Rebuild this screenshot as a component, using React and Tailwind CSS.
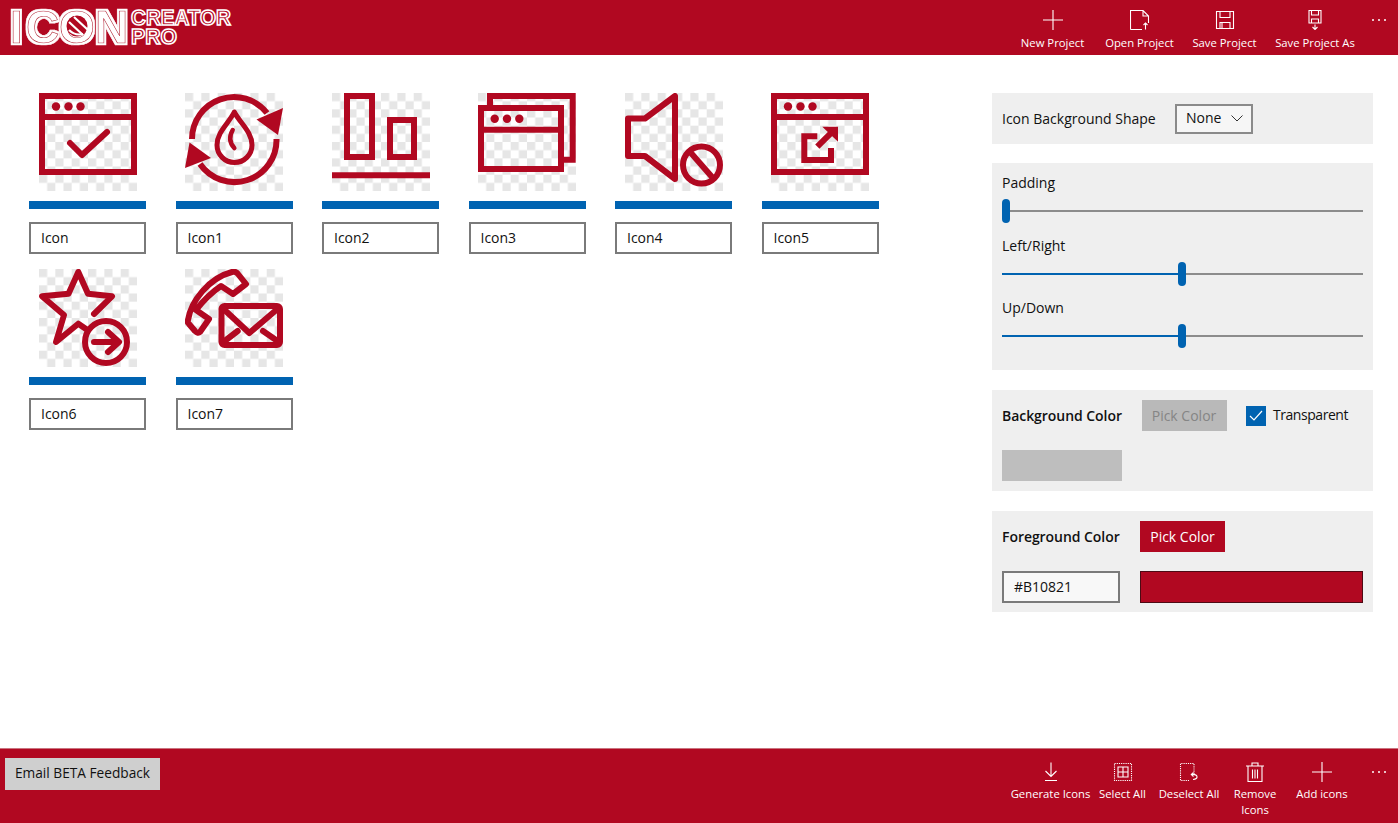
import React from 'react';

const RED = '#b10821';

const tiles = [
  { name: 'Icon', art: <WindowCheck /> },
  { name: 'Icon1', art: <DropCycle /> },
  { name: 'Icon2', art: <AlignBottom /> },
  { name: 'Icon3', art: <Windows /> },
  { name: 'Icon4', art: <SpeakerBlocked /> },
  { name: 'Icon5', art: <WindowExternal /> },
  { name: 'Icon6', art: <StarArrow /> },
  { name: 'Icon7', art: <PhoneMail /> },
];

function WindowFrame() {
  return (
    <>
      <rect x="3" y="3" width="92" height="76" />
      <path d="M3 24H95" />
      <g fill={RED} stroke="none">
        <circle cx="17" cy="13.5" r="4.2" />
        <circle cx="29.5" cy="13.5" r="4.2" />
        <circle cx="41.5" cy="13.5" r="4.2" />
      </g>
    </>
  );
}

function WindowCheck() {
  return (
    <>
      <WindowFrame />
      <path d="M31 50L43 62L68 39" strokeLinecap="round" strokeLinejoin="round" />
    </>
  );
}

function DropCycle() {
  return (
    <>
      <path d="M7 46A42 42 0 0 1 82 20" />
      <path d="M91.5 46A42 42 0 0 1 15 71" />
      <path d="M98 15L93 42L71.5 26.5Z" fill={RED} stroke="none" />
      <path d="M0 75L4.5 49.5L26 65Z" fill={RED} stroke="none" />
      <path d="M49.3 19C44 30 32 39 32 52A17.5 17.5 0 0 0 67 52C67 39 55 30 49.3 19Z" strokeWidth="5" strokeLinejoin="round" />
      <path d="M47.7 37Q42 47 49.3 55" strokeWidth="4.5" strokeLinecap="round" />
    </>
  );
}

function AlignBottom() {
  return (
    <>
      <rect x="15" y="3" width="25" height="61" />
      <rect x="58" y="27" width="24" height="37" />
      <path d="M0 82.3H98" />
    </>
  );
}

function Windows() {
  return (
    <>
      <path d="M12 12V3H94.7V66.7H86" />
      <rect x="3" y="15" width="80" height="61" />
      <path d="M3 36.7H83" />
      <g fill={RED} stroke="none">
        <circle cx="16.7" cy="25.7" r="4.2" />
        <circle cx="29" cy="25.7" r="4.2" />
        <circle cx="41.3" cy="25.7" r="4.2" />
      </g>
    </>
  );
}

function SpeakerBlocked() {
  return (
    <>
      <path d="M3 25.5H20L50 3V86L20 63H3Z" strokeLinejoin="round" />
      <circle cx="76.5" cy="72" r="18.5" />
      <path d="M66 60L87 84" />
    </>
  );
}

function WindowExternal() {
  return (
    <>
      <WindowFrame />
      <path d="M46.3 43.3H33.3V67H60V55" />
      <path d="M46.3 53.7L59.7 40.3" />
      <path d="M51.3 33.7H67V48.7Z" fill={RED} stroke="none" />
    </>
  );
}

function StarArrow() {
  return (
    <>
      <path d="M55 45L73 27.3L49 24.7L39.3 3L29.5 24.7L3 27.3L25 46L17 73L39.3 54.7L47 60" strokeLinejoin="round" strokeLinecap="round" />
      <circle cx="67" cy="73" r="21" />
      <path d="M55 73H79M69 63L80 73L69 83" strokeLinecap="round" strokeLinejoin="round" />
    </>
  );
}

function PhoneMail() {
  return (
    <>
      <path d="M3 51C6 32 24 9 47 3Q51 2 53 5L61 15L48 25L36 17C27 23 18 32 11 41L24 50L15 63Q13 65 10 62L4 55Q2 53 3 51Z" strokeLinejoin="round" />
      <rect x="36.5" y="37" width="58.5" height="39" rx="3" />
      <path d="M38.3 39.7L64.3 64L92.7 39.7M41 71L52.7 62M78 62L91 71" strokeLinecap="round" strokeLinejoin="round" />
    </>
  );
}

function IconArt({ name, children }) {
  const id = `checker-${name}`;
  return (
    <svg viewBox="0 0 98 98" className="w-[98px] h-[98px] block">
      <defs>
        <pattern id={id} width="16.34" height="16.34" patternUnits="userSpaceOnUse">
          <rect width="8.17" height="8.17" fill="#e6e6e6" />
          <rect x="8.17" y="8.17" width="8.17" height="8.17" fill="#e6e6e6" />
        </pattern>
      </defs>
      <rect width="98" height="98" fill={`url(#${id})`} />
      <g fill="none" stroke={RED} strokeWidth="6">{children}</g>
    </svg>
  );
}

function Tile({ name, art }) {
  return (
    <div className="flex flex-col items-center w-[117px]">
      <IconArt name={name}>{art}</IconArt>
      <div className="w-full h-2 bg-[#0063b1] mt-[10px]" />
      <div className="w-full h-8 mt-[13px] border-2 border-[#7a7a7a] pl-[10px] pb-[2px] flex items-center text-[14px] text-[#111]">{name}</div>
    </div>
  );
}

function Logo() {
  return (
    <svg viewBox="0 0 240 55" className="w-[240px] h-[55px] block">
      <defs>
        <filter id="halo" x="-10%" y="-10%" width="120%" height="120%">
          <feMorphology in="SourceAlpha" operator="dilate" radius="1.7" result="fat" />
          <feFlood floodColor="#ffffff" />
          <feComposite in2="fat" operator="in" result="edge" />
          <feMerge>
            <feMergeNode in="edge" />
            <feMergeNode in="SourceGraphic" />
          </feMerge>
        </filter>
      </defs>
      <text x="10 26 59 95" y="42.5" fontFamily="Liberation Sans" fontWeight="700" fontSize="46" fill="#fff" stroke={RED} strokeWidth="0.6" filter="url(#halo)">ICON</text>
      <circle cx="77" cy="26" r="10.5" fill={RED} />
      <g fill="none" stroke="#fff" strokeWidth="2.2">
        <path d="M69 22L83 35M74 17L88 30" />
        <path d="M69 30Q75 36 83 34" />
      </g>
      <text x="131" y="24.5" fontFamily="Liberation Sans" fontWeight="700" fontSize="22" textLength="100" lengthAdjust="spacingAndGlyphs" fill={RED} stroke="#fff" strokeWidth="1.6">CREATOR</text>
      <text x="131" y="44" fontFamily="Liberation Sans" fontWeight="700" fontSize="22" textLength="46" lengthAdjust="spacingAndGlyphs" fill={RED} stroke="#fff" strokeWidth="1.6">PRO</text>
    </svg>
  );
}

const glyphs = {
  plus: <path d="M10 0V20M0 10H20" />,
  open: <path d="M5 .5H13L18.5 6V13M13 .5V6H18.5M12 19.5H.5M.5 19.5V.5H5M15.5 19.5V13M13.5 15L15.5 13L17.5 15" />,
  save: <path d="M1.5 1.5H18.5V18.5H1.5ZM5 1.5V7.5H15V1.5M5 18.5V12.5H15V18.5M7 12.5V18.5" />,
  saveAs: <path d="M4 .5H16V13H4ZM6.5 .5V5H13.5V.5M6.5 13V9H13.5V13M10 14.5V19M7.5 17L10 19.5L12.5 17" />,
  download: <path d="M10 .5V14M4.5 9L10 14.5L15.5 9M4 18.5H16" />,
  select: (
    <>
      <path d="M1.5 1.5H18.5V18.5H1.5Z" strokeDasharray="1.2 1" />
      <path d="M5 5H15V15H5ZM10 5V15M5 10H15" />
    </>
  ),
  deselect: (
    <>
      <path d="M15 12V1.5H1.5V18.5H10" strokeDasharray="1.2 1" />
      <path d="M14 17.5Q18.5 17 18 14.5Q17.5 12 12.5 12.5M14.5 10.5L12.3 12.5L14.5 14.5" />
    </>
  ),
  trash: <path d="M3 4.5V19.5H17V4.5M1 4H19M7 4V1H13V4M7.5 7.5V16.5M10 7.5V16.5M12.5 7.5V16.5" />,
};

function ToolButton({ width, icon, label, gap = 'mt-[5px]' }) {
  return (
    <div className={`flex flex-col items-center text-white ${width}`}>
      <svg viewBox="0 0 20 20" className="w-5 h-5 block" fill="none" stroke="#fff" strokeWidth="1.1">{glyphs[icon]}</svg>
      <span className={`text-[11.3px] leading-4 text-center ${gap}`}>{label}</span>
    </div>
  );
}

function More() {
  return (
    <div className="w-[33px] h-5 pr-[6px] flex items-center justify-center gap-[4px]">
      <span className="w-[2px] h-[2px] rounded-full bg-white" />
      <span className="w-[2px] h-[2px] rounded-full bg-white" />
      <span className="w-[2px] h-[2px] rounded-full bg-white" />
    </div>
  );
}

function Slider({ label, filled }) {
  return (
    <div className="flex flex-col">
      <div className="text-[14px] leading-5 h-5">{label}</div>
      <div className="flex items-center h-6 mt-[6px]">
        <div className="h-[2px] bg-[#0063b1]" style={{ width: filled }} />
        <div className="w-2 h-6 rounded bg-[#0063b1]" />
        <div className="h-[2px] flex-1 bg-[#8c8c8c]" />
      </div>
    </div>
  );
}

export default function App() {
  return (
    <div className="w-[1398px] h-[823px] flex flex-col bg-white text-[#111] overflow-hidden font-['Open_Sans',sans-serif]">
      <header className="h-[55px] bg-[#b10821] flex justify-between shrink-0">
        <Logo />
        <div className="flex pt-[10px]">
          <ToolButton width="w-[85px]" icon="plus" label="New Project" />
          <ToolButton width="w-[89px]" icon="open" label="Open Project" />
          <ToolButton width="w-[81px]" icon="save" label="Save Project" />
          <ToolButton width="w-[100px]" icon="saveAs" label="Save Project As" />
          <More />
        </div>
      </header>

      <main className="flex-1 flex justify-between pl-[29px] pr-[25px] pt-[38px]">
        <div className="grid grid-cols-[repeat(6,117px)] gap-x-[29.5px] gap-y-[15px] content-start">
          {tiles.map((t) => (
            <Tile key={t.name} name={t.name} art={t.art} />
          ))}
        </div>

        <aside className="w-[381px] flex flex-col gap-5 text-[14px]">
          <section className="h-[51px] mb-[-1px] bg-[#efefef] px-[10px] flex items-center">
            <span className="w-[173px]">Icon Background Shape</span>
            <div className="w-[78px] h-[30px] border-2 border-[#8a8a8a] bg-[#f6f6f6] flex items-center justify-between pl-[9px] pr-[8px] pb-[2px]">
              <span>None</span>
              <svg viewBox="0 0 12 7" className="w-3 h-[7px] mt-[2px]" fill="none" stroke="#333" strokeWidth="1"><path d="M.5 .5L6 6L11.5 .5" /></svg>
            </div>
          </section>

          <section className="h-[207px] bg-[#efefef] px-[10px] pt-[10px] flex flex-col gap-[12.5px]">
            <Slider label="Padding" filled="0px" />
            <Slider label="Left/Right" filled="176px" />
            <Slider label="Up/Down" filled="176px" />
          </section>

          <section className="h-[101px] bg-[#efefef] px-[10px] py-[10px] flex flex-col gap-[19px]">
            <div className="flex items-center h-[31px]">
              <span className="w-[139.5px] font-semibold tracking-[-0.05px]">Background Color</span>
              <div className="w-[85px] h-[31px] bg-[#b9b9b9] text-[#858585] flex items-center justify-center">Pick Color</div>
              <div className="w-5 h-5 ml-[19.5px] bg-[#0063b1] flex items-center justify-center">
                <svg viewBox="0 0 14 11" className="w-[14px] h-[11px]" fill="none" stroke="#fff" strokeWidth="1.2"><path d="M1 6L5 10L13 1" /></svg>
              </div>
              <span className="ml-[7px] mb-[2px] tracking-[-0.45px]">Transparent</span>
            </div>
            <div className="w-[120px] h-[32px] bg-[#bebebe]" />
          </section>

          <section className="h-[101px] bg-[#efefef] px-[10px] py-[10px] flex flex-col gap-[19px]">
            <div className="flex items-center h-[31px]">
              <span className="w-[138px] font-semibold tracking-[-0.05px]">Foreground Color</span>
              <div className="w-[85px] h-[31px] bg-[#b10821] text-white flex items-center justify-center">Pick Color</div>
            </div>
            <div className="flex gap-5">
              <div className="w-[118px] h-8 border-2 border-[#7a7a7a] bg-[#f8f8f8] flex items-center pl-[10px] pb-[2px]">#B10821</div>
              <div className="flex-1 h-8 bg-[#b10821] border border-[#4d0a14]" />
            </div>
          </section>
        </aside>
      </main>

      <footer className="h-[75px] bg-[#b10821] flex justify-between shrink-0 border-t border-[#c9747f]">
        <div className="pl-[5px] pt-[9px]">
          <div className="w-[155px] h-8 pb-[2px] bg-[#cfcfcf] flex items-center justify-center text-[13.7px] text-[#111]">Email BETA Feedback</div>
        </div>
        <div className="flex pt-[13px]">
          <ToolButton width="w-[95px]" icon="download" label="Generate Icons" gap="mt-1" />
          <ToolButton width="w-[49px]" icon="select" label="Select All" gap="mt-1" />
          <ToolButton width="w-[84px]" icon="deselect" label="Deselect All" gap="mt-1" />
          <ToolButton width="w-[48px]" icon="trash" label="Remove Icons" gap="mt-1" />
          <ToolButton width="w-[86px]" icon="plus" label="Add icons" gap="mt-1" />
          <More />
        </div>
      </footer>
    </div>
  );
}
